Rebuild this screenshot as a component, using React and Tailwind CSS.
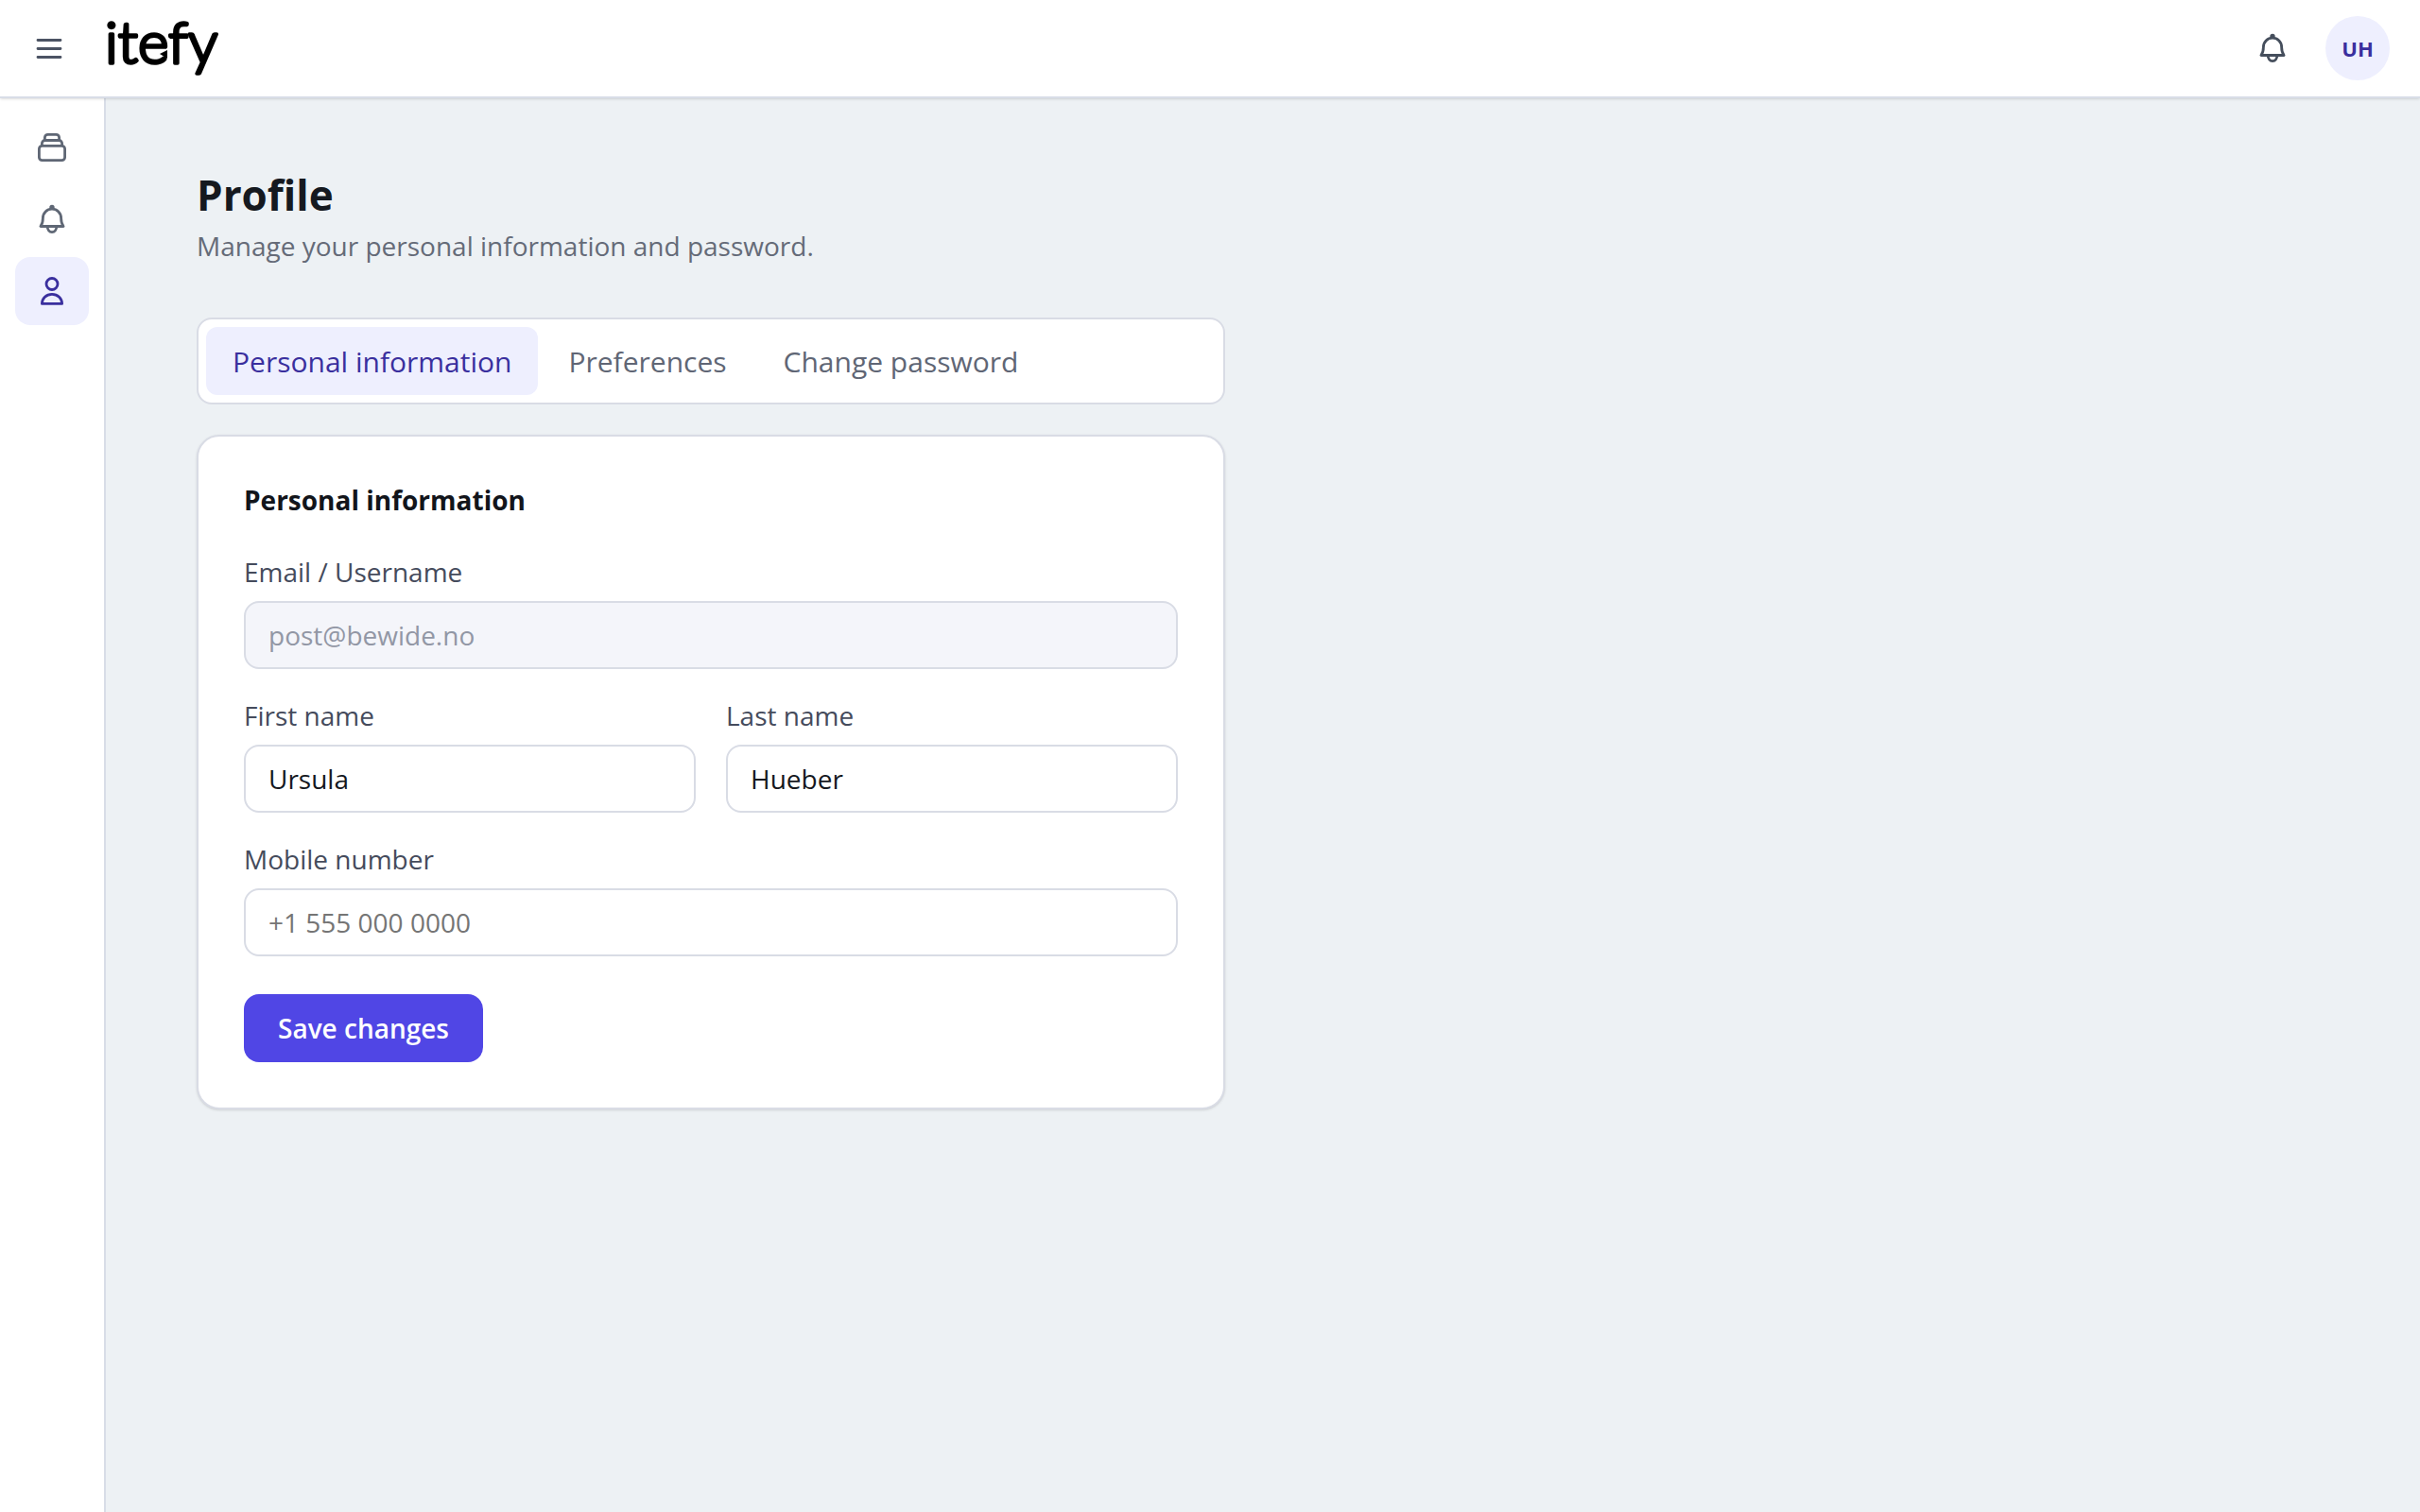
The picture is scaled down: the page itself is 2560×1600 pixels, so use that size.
import React, { useState } from 'react';
import clsx from 'clsx';

const MenuIcon = () => (
  <svg className="size-8" viewBox="0 0 32 32" fill="none" stroke="currentColor" strokeWidth="2.8" strokeLinecap="round" aria-hidden="true">
    <path d="M4 7.5h24M4 16.5h24M4 25.5h24" />
  </svg>
);

const StackIcon = () => (
  <svg className="size-8" viewBox="0 0 32 32" fill="none" stroke="currentColor" strokeWidth="2.8" strokeLinejoin="round" aria-hidden="true">
    <rect x="2.4" y="14.4" width="27.2" height="15.2" rx="3.2" />
    <path d="M5.4 14.4v-2.7a3.2 3.2 0 0 1 3.2-3.2h14.8a3.2 3.2 0 0 1 3.2 3.2v2.7" />
    <path d="M8.4 8.5V5.6a3.2 3.2 0 0 1 3.2-3.2h8.8a3.2 3.2 0 0 1 3.2 3.2v2.9" />
  </svg>
);

const BellIcon = () => (
  <svg className="size-8" viewBox="0 0 32 32" fill="none" stroke="currentColor" strokeWidth="2.8" strokeLinecap="round" strokeLinejoin="round" aria-hidden="true">
    <circle cx="16" cy="3.4" r="1.3" fill="currentColor" />
    <path d="M16 5.2c-5.4 0-9.6 4.2-9.6 9.6 0 3.8-.5 6-2.5 8.7h24.2c-2-2.7-2.5-4.9-2.5-8.7 0-5.4-4.2-9.6-9.6-9.6z" />
    <path d="M11.2 23.8c0 3.2 1.9 5.8 4.8 5.8s4.8-2.6 4.8-5.8" />
  </svg>
);

const UserIcon = () => (
  <svg className="size-8" viewBox="0 0 32 32" fill="none" stroke="currentColor" strokeWidth="2.8" strokeLinejoin="round" aria-hidden="true">
    <circle cx="16" cy="8.5" r="6" />
    <path d="M5.4 29.4c0-5.6 4.6-10 10.6-10s10.6 4.4 10.6 10z" />
  </svg>
);

const Logo = () => (
  <svg className="h-20 w-32" viewBox="0 0 128 80" role="img" aria-label="itefy">
    <text
      x="-1"
      y="56"
      className="font-['Lato',sans-serif] text-[62px] font-light"
      fill="#000"
      stroke="#000"
      strokeWidth="3.6"
      strokeLinejoin="round"
    >
      itefy
    </text>
    {/* arrow tip on the tail of the e */}
    <path d="M57 46l8-4v9z" fill="#000" />
  </svg>
);

const navItems = [
  { label: 'Assets', icon: StackIcon },
  { label: 'Notifications', icon: BellIcon },
  { label: 'Profile', icon: UserIcon, active: true },
];

const tabs = ['Personal information', 'Preferences', 'Change password'];

function Field({ id, label, ...props }) {
  return (
    <div className="flex flex-col gap-3.5">
      <label htmlFor={id} className="text-[28px] leading-[34px] font-medium text-[#454b5c]">
        {label}
      </label>
      <input
        id={id}
        name={id}
        className="h-18 w-full rounded-2xl border-2 border-[#d9dce5] bg-white px-6 text-[28px] text-[#15181e] outline-none placeholder:text-[#757575] disabled:bg-[#f4f5fa] disabled:text-[#9297a5]"
        {...props}
      />
    </div>
  );
}

export default function App() {
  const [activeTab, setActiveTab] = useState(tabs[0]);
  const [formData, setFormData] = useState({ firstName: 'Ursula', lastName: 'Hueber', mobile: '' });

  const handleChange = (e) => {
    const { name, value } = e.target;
    setFormData((prev) => ({ ...prev, [name]: value }));
  };

  return (
    <div className="flex min-h-screen flex-col bg-[#edf1f4] font-['Open_Sans',sans-serif]">
      <header className="z-10 flex h-26 items-center border-b-2 border-[#d8dde7] bg-white px-8 shadow-sm">
        <button type="button" aria-label="Toggle menu" className="flex size-10 items-center justify-center text-[#4b5363]">
          <MenuIcon />
        </button>
        <a href="#" className="ml-10">
          <Logo />
        </a>
        <div className="ml-auto flex items-center gap-9">
          <button type="button" aria-label="Notifications" className="flex size-10 items-center justify-center text-[#454e5c]">
            <BellIcon />
          </button>
          <button type="button" className="size-17 rounded-full bg-[#eeeffe] text-[22px] font-bold text-[#3a2f9e]">
            UH
          </button>
        </div>
      </header>

      <div className="flex flex-1">
        <aside className="w-28 shrink-0 border-r-2 border-[#d8dde7] bg-white px-4 py-4">
          <nav className="flex flex-col gap-1">
            {navItems.map(({ label, icon: Icon, active }) => (
              <a
                key={label}
                href="#"
                aria-label={label}
                className={clsx(
                  'flex h-18 items-center justify-center rounded-2xl',
                  active ? 'bg-[#eeeffe] text-[#3a2f9e]' : 'text-[#5f6775]'
                )}
              >
                <Icon />
              </a>
            ))}
          </nav>
        </aside>

        <main className="flex-1 px-24 py-18">
          <div className="w-full max-w-[1088px]">
            <h1 className="text-[44px] leading-15 font-bold text-[#15191f]">Profile</h1>
            <p className="mt-1 text-[28px] leading-10 text-[#656b78]">Manage your personal information and password.</p>

            <div role="tablist" className="mt-14 flex gap-1 rounded-2xl border-2 border-[#d9dce5] bg-white p-2">
              {tabs.map((tab) => (
                <button
                  key={tab}
                  type="button"
                  role="tab"
                  aria-selected={activeTab === tab}
                  onClick={() => setActiveTab(tab)}
                  className={clsx(
                    'h-18 rounded-xl px-7 text-[30px] font-medium',
                    activeTab === tab ? 'bg-[#eeeffe] text-[#3a2f9e]' : 'text-[#606675]'
                  )}
                >
                  {tab}
                </button>
              ))}
            </div>

            <section className="mt-8 rounded-3xl border-2 border-[#d9dce5] bg-white p-12 shadow-sm">
              <h2 className="text-[28px] leading-[38px] font-bold text-[#12151b]">Personal information</h2>
              <form className="mt-10" onSubmit={(e) => e.preventDefault()}>
                <div className="flex flex-col gap-8">
                  <Field id="email" label="Email / Username" type="email" value="post@bewide.no" disabled readOnly />
                  <div className="grid grid-cols-2 gap-8">
                    <Field id="firstName" label="First name" value={formData.firstName} onChange={handleChange} />
                    <Field id="lastName" label="Last name" value={formData.lastName} onChange={handleChange} />
                  </div>
                  <Field id="mobile" label="Mobile number" type="tel" placeholder="+1 555 000 0000" value={formData.mobile} onChange={handleChange} />
                </div>
                <button type="submit" className="mt-10 h-18 rounded-2xl bg-[#5046e5] px-9 text-[28px] font-semibold text-white">
                  Save changes
                </button>
              </form>
            </section>
          </div>
        </main>
      </div>
    </div>
  );
}
